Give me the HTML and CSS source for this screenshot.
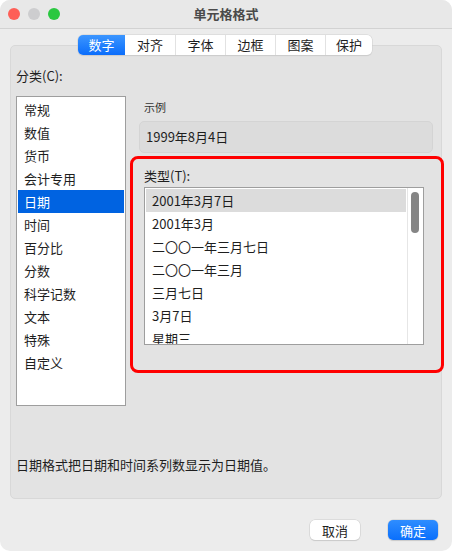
FILE: index.html
```html
<!DOCTYPE html>
<html lang="zh">
<head>
    <meta charset="UTF-8">
    <title>单元格格式</title>
    <link rel="stylesheet" href="styles.css">
</head>
<body>
    <div class="window">
        <div class="titlebar">
            <div class="lights">
                <span class="light red"></span>
                <span class="light gray"></span>
                <span class="light green"></span>
            </div>
            <div class="title">单元格格式</div>
        </div>

        <div class="tabs">
            <div class="tab active">数字</div>
            <div class="tab">对齐</div>
            <div class="tab">字体</div>
            <div class="tab">边框</div>
            <div class="tab">图案</div>
            <div class="tab">保护</div>
        </div>

        <div class="panel">
            <div class="label cat-label">分类(C):</div>
            <div class="main">
                <ul class="list cat-list">
                    <li>常规</li>
                    <li>数值</li>
                    <li>货币</li>
                    <li>会计专用</li>
                    <li class="selected">日期</li>
                    <li>时间</li>
                    <li>百分比</li>
                    <li>分数</li>
                    <li>科学记数</li>
                    <li>文本</li>
                    <li>特殊</li>
                    <li>自定义</li>
                </ul>
                <div class="right">
                    <div class="small-label">示例</div>
                    <div class="sample">1999年8月4日</div>
                    <div class="type-group">
                        <div class="label">类型(T):</div>
                        <div class="type-list">
                            <ul class="type-items">
                                <li class="selected">2001年3月7日</li>
                                <li>2001年3月</li>
                                <li>二〇〇一年三月七日</li>
                                <li>二〇〇一年三月</li>
                                <li>三月七日</li>
                                <li>3月7日</li>
                                <li>星期三</li>
                            </ul>
                            <div class="scrollbar"><div class="thumb"></div></div>
                        </div>
                    </div>
                </div>
            </div>
            <div class="desc">日期格式把日期和时间系列数显示为日期值。</div>
        </div>

        <div class="footer">
            <button class="btn">取消</button>
            <button class="btn primary">确定</button>
        </div>
    </div>
</body>
</html>
```

FILE: styles.css
```css
body {
    margin: 0;
    background: #ffffff;
    font-family: "Noto Sans CJK SC", "Liberation Sans", sans-serif;
    font-size: 13px;
    color: #1e1e1e;
}
.window {
    width: 452px;
    height: 551px;
    background: #ececec;
    border-radius: 10px;
    overflow: hidden;
}
.titlebar {
    height: 28px;
    border-bottom: 1px solid #d2d2d2;
    background: #e8e8e8;
    display: flex;
    align-items: center;
}
.lights {
    display: flex;
    gap: 8px;
    padding-left: 8px;
}
.light {
    width: 12px;
    height: 12px;
    border-radius: 50%;
}
.red { background: #fe5f57; }
.gray { background: #cdcdcf; }
.green { background: #2ac840; }
.title {
    flex: 1;
    text-align: center;
    font-weight: bold;
    color: #4a4a4a;
    margin-right: 60px;
    line-height: 28px;
}
.tabs {
    display: flex;
    width: 294px;
    height: 20px;
    margin: 6px 0 -10px 78px;
    background: #ffffff;
    border-radius: 5px;
    box-shadow: 0 0 0 0.5px #cfcfcf, 0 1px 1px rgba(0, 0, 0, 0.12);
    position: relative;
    z-index: 1;
    overflow: hidden;
}
.tab {
    width: 50px;
    line-height: 20px;
    text-align: center;
    border-left: 1px solid #e2e2e2;
    box-sizing: border-box;
}
.tab:first-child, .tab.active + .tab {
    border-left: none;
}
.tab.active {
    width: 47px;
    color: #ffffff;
    background: linear-gradient(#3c96ff, #0b6dfb);
}
.tab:last-child {
    width: 47px;
}
.panel {
    margin: 0 10px;
    height: 454px;
    box-sizing: border-box;
    background: #e3e3e3;
    border: 1px solid #d8d8d8;
    border-radius: 5px;
    padding: 21px 0 24px 5px;
    display: flex;
    flex-direction: column;
}
.label {
    line-height: 18px;
}
.main {
    display: flex;
    gap: 4px;
    margin-top: 11px;
}
.list, .type-items {
    list-style: none;
    margin: 0;
    padding: 1px;
    background: #ffffff;
}
.cat-list {
    flex-shrink: 0;
    width: 110px;
    height: 310px;
    box-sizing: border-box;
    border: 1px solid #9e9e9e;
}
.cat-list li {
    height: 23px;
    line-height: 23px;
    padding-left: 6px;
}
.cat-list li.selected {
    background: #0063e1;
    color: #ffffff;
}
.right {
    flex-shrink: 0;
    display: flex;
    flex-direction: column;
}
.small-label {
    font-size: 11px;
    line-height: 16px;
    margin: 3px 0 0 14px;
    color: #333333;
}
.sample {
    margin: 6px 0 0 9px;
    width: 294px;
    height: 32px;
    box-sizing: border-box;
    background: #dcdcdc;
    border: 1px solid #d4d4d4;
    border-radius: 5px;
    padding-left: 6px;
    line-height: 30px;
}
.type-group {
    margin-top: 3px;
    width: 314px;
    height: 217px;
    box-sizing: border-box;
    border: 3px solid #ff0000;
    border-radius: 8px;
    padding: 8px 0 0 11px;
}
.type-list {
    margin-top: 2px;
    width: 280px;
    height: 158px;
    box-sizing: border-box;
    border: 1px solid #9e9e9e;
    background: #ffffff;
    display: flex;
    overflow: hidden;
}
.type-items {
    flex: 1;
}
.type-items li {
    height: 23px;
    line-height: 23px;
    padding-left: 6px;
}
.type-items li.selected {
    background: #dcdcdc;
}
.scrollbar {
    width: 16px;
    border-left: 1px solid #e6e6e6;
    padding: 4px 0 0 3px;
    box-sizing: border-box;
}
.thumb {
    width: 8px;
    height: 41px;
    border-radius: 4px;
    background: #858585;
}
.desc {
    margin-top: auto;
    line-height: 18px;
}
.footer {
    display: flex;
    justify-content: flex-end;
    gap: 28px;
    padding: 21px 14px 0 0;
}
.btn {
    width: 50px;
    height: 20px;
    padding: 0;
    font-family: inherit;
    font-size: 13px;
    color: #1e1e1e;
    background: #ffffff;
    border: none;
    border-radius: 5px;
    box-shadow: 0 0 0 0.5px #cccccc, 0 1px 1px rgba(0, 0, 0, 0.15);
}
.btn.primary {
    color: #ffffff;
    background: linear-gradient(#2f8dff, #0a6ffc);
}
```
